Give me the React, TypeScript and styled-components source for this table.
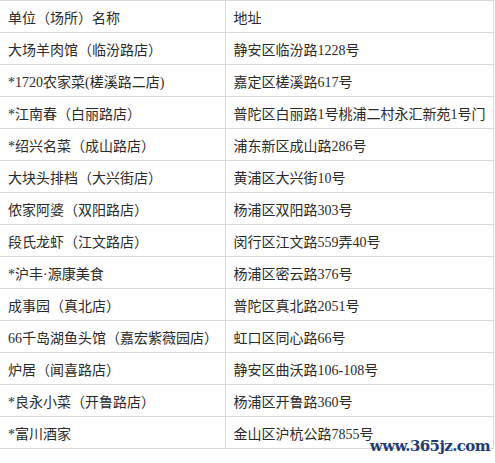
import styled, { createGlobalStyle } from "styled-components";

const GlobalStyle = createGlobalStyle`
  html, body {
    margin: 0;
    padding: 0;
    background: #fff;
  }
`;

const rows: [string, string][] = [
  ["大场羊肉馆（临汾路店）", "静安区临汾路1228号"],
  ["*1720农家菜(槎溪路二店)", "嘉定区槎溪路617号"],
  ["*江南春（白丽路店）", "普陀区白丽路1号桃浦二村永汇新苑1号门"],
  ["*绍兴名菜（成山路店）", "浦东新区成山路286号"],
  ["大块头排档（大兴街店）", "黄浦区大兴街10号"],
  ["侬家阿婆（双阳路店）", "杨浦区双阳路303号"],
  ["段氏龙虾（江文路店）", "闵行区江文路559弄40号"],
  ["*沪丰·源康美食", "杨浦区密云路376号"],
  ["成事园（真北店）", "普陀区真北路2051号"],
  ["66千岛湖鱼头馆（嘉宏紫薇园店）", "虹口区同心路66号"],
  ["炉居（闻喜路店）", "静安区曲沃路106-108号"],
  ["*良永小菜（开鲁路店）", "杨浦区开鲁路360号"],
  ["*富川酒家", "金山区沪杭公路7855号"],
];

const Page = styled.div`
  position: relative;
  width: 495px;
  height: 463px;
  overflow: hidden;
`;

const Table = styled.table`
  width: 494px;
  border-collapse: collapse;
  table-layout: fixed;
  font-family: "Liberation Serif", "Noto Sans CJK SC", serif;
  font-size: 14px;
  color: #2a2a2a;
`;

const Cell = styled.td<{ $first?: boolean }>`
  width: ${(p) => (p.$first ? "225px" : "auto")};
  height: 32px;
  padding: 0 0 0 8px;
  border: 1px solid #dcdcdc;
  border-left: ${(p) => (p.$first ? "none" : "1px solid #dcdcdc")};
  vertical-align: middle;
  white-space: nowrap;
  overflow: hidden;
  box-sizing: border-box;
`;

const Watermark = styled.span`
  position: absolute;
  right: 5px;
  bottom: 8px;
  font-family: "DejaVu Serif", "Liberation Serif", serif;
  font-weight: bold;
  font-size: 15px;
  color: #1f3c74;
  letter-spacing: -0.6px;
`;

export default function App() {
  return (
    <Page>
      <GlobalStyle />
      <Table>
        <tbody>
          <tr>
            <Cell $first>单位（场所）名称</Cell>
            <Cell>地址</Cell>
          </tr>
          {rows.map(([name, addr]) => (
            <tr key={name}>
              <Cell $first>{name}</Cell>
              <Cell>{addr}</Cell>
            </tr>
          ))}
        </tbody>
      </Table>
      <Watermark>www.365jz.com</Watermark>
    </Page>
  );
}
